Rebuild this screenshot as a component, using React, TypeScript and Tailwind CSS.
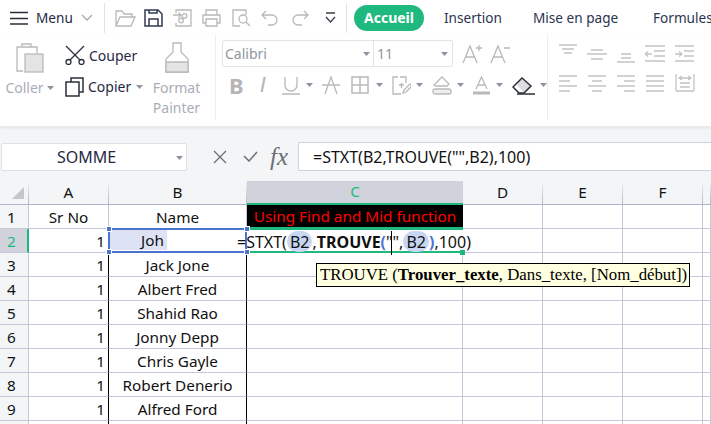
import React from "react";

const Caret = ({ className = "" }: { className?: string }) => (
  <svg width="7" height="4" viewBox="0 0 7 4" className={`shrink-0 ${className}`}>
    <path d="M0 0h7L3.5 4z" fill="#8f93a0" />
  </svg>
);

const Icon: React.FC<{ w: number; h: number; c?: string; className?: string; children: React.ReactNode }> = ({
  w,
  h,
  c = "#b9b9b9",
  className = "",
  children,
}) => (
  <svg
    width={w}
    height={h}
    viewBox={`0 0 ${w} ${h}`}
    fill="none"
    stroke={c}
    strokeWidth="1.3"
    className={`shrink-0 ${className}`}
  >
    {children}
  </svg>
);

const TopBar = () => (
  <div className="h-[35px] flex items-center text-[13.6px] whitespace-nowrap overflow-hidden">
    <Icon w={18} h={14} c="#2b2f3a" className="ml-[10px]">
      <path d="M0 1.500h18M0 7.500h18M0 13h18" />
    </Icon>
    <span className="ml-[8px] mt-px w-[36px] shrink-0 text-[#1f2a44]">Menu</span>
    <Icon w={12} h={7} c="#a5a8b0" className="ml-[9px]">
      <path d="M1 1l5 5 5-5" />
    </Icon>
    <div className="ml-[11px] w-px h-[30px] shrink-0 bg-[#e2e3e6]" />
    <Icon w={21} h={18} className="ml-[10px]">
      <path d="M1 17V2h6l2 3h8v3M1 17h15l4-9H5z" />
    </Icon>
    <Icon w={19} h={18} c="#2f3a52" className="ml-[8px]">
      <path d="M1 1h13l4 4v12H1zM5 17v-7h9v7M5 1v3h8V1" strokeWidth="1.5" />
    </Icon>
    <Icon w={20} h={18} className="ml-[10px]">
      <path d="M3 4V1h15v16H3v-3M0 6h8M5.500 3.500L8 6l-2.500 2.500" />
      <circle cx="11.500" cy="7" r="2.300" />
      <circle cx="8" cy="11.500" r="2.300" />
    </Icon>
    <Icon w={19} h={18} className="ml-[9px]">
      <path d="M4 6V1h11v5M4 14H1V6h17v8h-3M4 10h11v7H4z" />
    </Icon>
    <Icon w={19} h={18} className="ml-[11px]">
      <path d="M8 17H1V1h13v5M7 10a4 4 0 1 0 8 0 4 4 0 1 0-8 0M14 13l4 4" />
    </Icon>
    <Icon w={17} h={16} className="ml-[10px]">
      <path d="M5 1L1 5l4 4M1 5h10a5 5 0 0 1 0 10H7" />
    </Icon>
    <Icon w={17} h={16} className="ml-[14px]">
      <path d="M12 1l4 4-4 4M16 5H6a5 5 0 0 0 0 10h4" />
    </Icon>
    <Icon w={11} h={11} c="#3a3f4b" className="ml-[16px]">
      <path d="M1 1h9M1 5l4.500 5L10 5" />
    </Icon>
    <div className="ml-[10px] w-px h-[30px] shrink-0 bg-[#e2e3e6]" />
    <span className="ml-[7px] h-[26px] w-[70px] shrink-0 rounded-full bg-[#1fb97f] text-white text-[14px] font-bold flex items-center justify-center">
      Accueil
    </span>
    <span className="ml-[20px] mt-px w-[57px] shrink-0 text-[#2a3550]">Insertion</span>
    <span className="ml-[32px] mt-px w-[89px] shrink-0 text-[#2a3550]">Mise en page</span>
    <span className="ml-[31px] mt-px shrink-0 text-[#2a3550]">Formules</span>
  </div>
);

const ClipSection = () => (
  <div className="w-[216px] h-[86px] shrink-0 border-r border-[#eeeff1] flex text-[14px] leading-[20px] whitespace-nowrap">
    <div className="w-[58px] flex flex-col items-center pt-[8px] pl-px">
      <Icon w={28} h={30}>
        <path d="M6 4H1v24h6M6 4V1h9v3h6v6M6 4h9" />
        <rect x="9" y="11" width="18" height="18" fill="#e4e4e4" />
      </Icon>
      <div className="flex items-center gap-[3px] mt-[5px] text-[#a9adb5]">
        Coller
        <Caret />
      </div>
    </div>
    <div className="w-[86px] pl-[7px] pt-[9px] flex flex-col text-[#1f2a44]">
      <div className="flex items-center gap-[4px] h-[24px]">
        <Icon w={20} h={20} c="#2b2f3a" className="mt-[-2px]">
          <path d="M1 1l14 14M19 1L5 15" />
          <circle cx="3.500" cy="17" r="2.500" />
          <circle cx="16.500" cy="17" r="2.500" />
        </Icon>
        Couper
      </div>
      <div className="flex items-center gap-[4px] h-[24px] mt-[7px]">
        <Icon w={19} h={20} c="#2b2f3a" className="mt-[-1px]">
          <path d="M6 5V1h12v14h-4M1 5h13v14H1z" strokeWidth="1.5" />
        </Icon>
        Copier
        <Caret className="ml-[1px]" />
      </div>
    </div>
    <div className="w-[72px] flex flex-col items-center text-[#a9adb5] pt-[7px] pr-[5px] -ml-[1px]">
      <Icon w={24} h={31}>
        <path d="M8 1h8v9l7 7v13H1V17l7-7z" />
        <path d="M1 20h22v10H1z" fill="#e4e4e4" />
      </Icon>
      <span className="mt-[5px]">Format</span>
      <span>Painter</span>
    </div>
  </div>
);

const FontSection = () => (
  <div className="w-[332px] h-[86px] shrink-0 border-r border-[#eeeff1] pl-[6px] pt-[5px] text-[14px] whitespace-nowrap">
    <div className="flex items-center">
      <div className="w-[231px] h-[27px] border border-[#e3e4e7] rounded-[2px] flex items-center text-[#9096a0]">
        <span className="w-[151px] pl-[2px] border-r border-[#e3e4e7] h-full flex items-center relative">
          Calibri
          <Caret className="absolute right-[3px] top-[11px]" />
        </span>
        <span className="pl-[3px] grow flex items-center justify-between pr-[4px]">
          11
          <Caret />
        </span>
      </div>
      <Icon w={20} h={20} className="ml-[9px]">
        <path d="M1 19L8 2l7 17M4 13h8M14 4h6M17 1v6" />
      </Icon>
      <Icon w={20} h={20} className="ml-[8px]">
        <path d="M1 19L8 2l7 17M4 13h8M14 4h6" />
      </Icon>
    </div>
    <div className="flex items-center mt-[5px] h-[26px] text-[#b5b5b5]">
      <span className="ml-[7px] w-[15px] font-bold text-[22px] leading-none">B</span>
      <span className="ml-[16px] w-[11px] text-[22px] italic leading-none font-['Liberation_Sans',sans-serif] font-light">I</span>
      <Icon w={18} h={19} className="ml-[14px]">
        <path d="M3 1v8a6 6 0 0 0 12 0V1M0 18h18" />
      </Icon>
      <Caret className="ml-[6px]" />
      <Icon w={18} h={19} className="ml-[9px]">
        <path d="M3 18L9 1l6 17M0 9h18" />
      </Icon>
      <Icon w={18} h={18} className="ml-[11px]">
        <path d="M1 1h16v16H1zM1 9h16M9 1v16" strokeWidth="1.5" />
      </Icon>
      <Caret className="ml-[7px]" />
      <Icon w={19} h={19} className="ml-[9px]">
        <path d="M6 1H1v17h8M14 7V1H8M7 9h5M9.500 7v5M11 17l1-3 6-6 2 2-6 6z" />
      </Icon>
      <Caret className="ml-[5px]" />
      <Icon w={20} h={19} className="ml-[9px]">
        <path d="M2 9l8-8 7 7-2 2H4z" />
        <rect x="1" y="13" width="18" height="5" rx="2" fill="#eeeeee" />
      </Icon>
      <Caret className="ml-[5px]" />
      <Icon w={17} h={19} className="ml-[9px]">
        <path d="M3 13L8.500 1 14 13M5 9h7" />
        <path d="M0 17h17" strokeWidth="3" />
      </Icon>
      <Caret className="ml-[6px]" />
      <Icon w={26} h={19} c="#2b2f3a" className="ml-[9px]">
        <path d="M9 3l10 7-7 7-7-8z" fill="#dddddd" stroke="none" />
        <path d="M1 11l9-9 9 8-7 7H7z" strokeWidth="1.5" />
        <path d="M5 18h18" strokeWidth="1.5" />
      </Icon>
      <Caret className="ml-[2px]" />
    </div>
  </div>
);

const AlignSection = () => {
  const c = "#c4c4c4";
  return (
    <div className="pl-[11px] pt-[9px] flex flex-col gap-[9px]">
      <div className="flex gap-[10px] items-start">
        <Icon w={18} h={20} c={c}>
          <path d="M0 1h18M3 5h12M5 9h8" />
        </Icon>
        <Icon w={20} h={20} c={c}>
          <path d="M4 6h12M0 10h20M4 15h12" />
        </Icon>
        <Icon w={18} h={20} c={c}>
          <path d="M4 10h10M4 14h10M0 18h18" />
        </Icon>
        <Icon w={20} h={20} c={c}>
          <path d="M0 2h20M9 7h11M0 10h7M3 7.500L0 10l3 2.500M9 12h11M0 17h20" />
        </Icon>
        <Icon w={19} h={20} c={c}>
          <path d="M0 2h19M9 7h10M0 10h7M4 7.500L7 10l-3 2.500M9 12h10M0 17h19" />
        </Icon>
      </div>
      <div className="flex gap-[11px] items-start">
        <Icon w={18} h={19} c={c}>
          <path d="M0 3h18M0 8h11M0 13h18M0 18h11" />
        </Icon>
        <Icon w={18} h={19} c={c}>
          <path d="M0 3h18M4 8h10M0 13h18M4 18h10" />
        </Icon>
        <Icon w={18} h={19} c={c}>
          <path d="M0 3h18M7 8h11M0 13h18M7 18h11" />
        </Icon>
        <Icon w={18} h={19} c={c}>
          <path d="M0 3h18M0 8h18M0 13h18M0 18h18" />
        </Icon>
        <Icon w={20} h={19} c={c}>
          <path d="M1 1v17M19 1v17M1 18h18M5 10h10M5 14h10M4 5h12M7 3L4 5l3 2M13 3l3 2-3 2" />
        </Icon>
      </div>
    </div>
  );
};

const FormulaBar = () => (
  <div className="h-[44px] bg-[#f4f5f7] pt-[15px] flex items-stretch text-[16px] whitespace-nowrap text-[#111]">
    <div className="ml-px w-[186px] h-[28px] mt-px bg-white border border-[#dfe0e3] rounded-[2px] flex items-center relative">
      <span className="w-full text-center pr-[15px] text-[#1f2a44]">SOMME</span>
      <Caret className="absolute right-[3px] top-[12px]" />
    </div>
    <div className="flex items-center h-[29px] w-[111px] shrink-0">
      <Icon w={14} h={14} c="#6b6f78" className="ml-[26px]">
        <path d="M1 1l12 12M13 1L1 13" />
      </Icon>
      <Icon w={15} h={11} c="#6b6f78" className="ml-[16px]">
        <path d="M1 5l5 5 8-9" strokeWidth="1.5" />
      </Icon>
      <span className="ml-[12px] font-['Liberation_Serif',serif] italic text-[25px] leading-none text-[#6b6f78]">fx</span>
    </div>
    <div className="grow h-[29px] bg-white border-y border-l border-[#cfd2dc] rounded-l-[2px] pl-[14px] flex items-center">
      =STXT(B2,TROUVE("",B2),100)
    </div>
  </div>
);

const columns = ["A", "B", "C", "D", "E", "F", ""];

const names = ["Jack Jone", "Albert Fred", "Shahid Rao", "Jonny Depp", "Chris Gayle", "Robert Denerio", "Alfred Ford", ""];

const Sheet = () => {
  const line = "border-r border-b border-[#c4c9da]";
  const cell = `h-[24px] pt-[2px] flex items-center ${line}`;
  return (
    <div className="relative grid grid-cols-[29px_80px_138px_216px_80px_80px_80px_8px] text-[15.3px] leading-none whitespace-nowrap text-[#111]">
      {/* header */}
      <div className="h-[34px] bg-[#f4f5f7] border-b border-[#aeb4c8] pt-[10px]">
        <div className="h-[23px] relative border-r border-[#aeb4c8] [border-image:linear-gradient(to_bottom,#f4f5f7,#aeb4c8)_1]">
          <svg width="12" height="12" viewBox="0 0 12 12" className="absolute left-[12px] top-[6px]">
            <path d="M12 0v12H0z" fill="#c4c6cc" />
          </svg>
        </div>
      </div>
      {columns.map((c) =>
        c === "C" ? (
          <div key={c} className="h-[34px] bg-[#f4f5f7] pt-[10px]">
            <div className="h-[24px] bg-[#d0d3db] border-b-2 border-[#1fb97f] text-[#1fb97f] flex items-center justify-center">
              C
            </div>
          </div>
        ) : (
          <div key={c} className="h-[34px] bg-[#f4f5f7] border-b border-[#aeb4c8] pt-[10px]">
            <div className="h-[23px] flex items-center justify-center border-r border-[#aeb4c8] [border-image:linear-gradient(to_bottom,#f4f5f7,#aeb4c8)_1]">
              {c}
            </div>
          </div>
        ),
      )}

      {/* row 1 */}
      <div className={`${cell} bg-[#f4f5f7] pl-[7px]`}>1</div>
      <div className={`${cell} justify-center`}>Sr No</div>
      <div className={`${cell} justify-center`}>Name</div>
      <div className="h-[24px] pt-[2px] bg-black text-[#ff0000] flex items-center justify-center border-b-2 border-[#1fb97f]">
        Using Find and Mid function
      </div>
      {[0, 1, 2, 3].map((i) => (
        <div key={i} className={cell} />
      ))}

      {/* row 2 */}
      <div className="h-[24px] pt-[2px] bg-[#d0d3db] text-[#1fb97f] border-r-2 border-[#1fb97f] border-b border-b-[#c4c9da] pl-[7px] flex items-center">
        2
      </div>
      <div className={`${cell} justify-end pr-[3px]`}>1</div>
      <div className="h-[24px]" />
      <div className="h-[24px]" />
      {[0, 1, 2, 3].map((i) => (
        <div key={i} className={cell} />
      ))}

      {/* rows 3-10 */}
      {names.map((n, i) => (
        <React.Fragment key={i}>
          <div className={`${cell} bg-[#f4f5f7] pl-[7px]`}>{i + 3 > 9 ? "" : i + 3}</div>
          <div className={`${cell} justify-end pr-[3px] border-r-black`}>{n ? 1 : ""}</div>
          <div className={`${cell} justify-center border-r-black`}>{n}</div>
          {[0, 1, 2, 3, 4].map((k) => (
            <div key={k} className={cell} />
          ))}
        </React.Fragment>
      ))}

      {/* cell being edited, over the grid */}
      <div className="absolute left-[110px] top-[59px] w-[57px] h-[20px] pt-[2px] bg-[#dde3f5] flex items-center pl-[31px]">Joh</div>
      <div className="absolute left-[108px] top-[57px] w-[139px] h-[25px] border-2 border-[#4a74d0]" />
      <div className="absolute left-[247px] top-[57px] w-[216px] h-[25px] border-y-2 border-[#1fb97f]" />
      <div className="absolute left-[106px] top-[55px] size-[6px] bg-[#4a74d0] border border-white" />
      <div className="absolute left-[244px] top-[55px] size-[6px] bg-[#4a74d0] border border-white" />
      <div className="absolute left-[106px] top-[78px] size-[6px] bg-[#4a74d0] border border-white" />
      <div className="absolute left-[244px] top-[78px] size-[6px] bg-[#4a74d0] border border-white" />
      <div className="absolute left-[460px] top-[79px] size-[5px] bg-[#1fb97f]" />

      <div className="absolute left-[237px] top-[60px] h-[21px] text-[16px] flex items-center">
        =STXT(
        <span className="bg-[#c8d6f2] rounded-full px-[3px] h-[21px] flex items-center">B2</span>
        <span>,</span>
        <span className="font-bold">TROUVE</span>
        <span className="font-bold text-[#4a74d0]">(</span>
        <span className="relative">
          ""
          <span className="absolute left-[5px] top-[-3px] w-px h-[24px] bg-black" />
        </span>
        ,
        <span className="bg-[#c8d6f2] rounded-full px-[3px] h-[21px] flex items-center">B2</span>
        <span className="font-bold text-[#4a74d0]">)</span>
        ,100)
      </div>

      <div className="absolute left-[316px] top-[92px] h-[24px] bg-[#ffffe1] border border-black pl-[3px] pr-[2px] flex items-center font-['Liberation_Serif',serif] text-[16.8px] text-black">
        TROUVE (<b>Trouver_texte</b>, Dans_texte, [Nom_début])
      </div>
    </div>
  );
};

export default function App() {
  return (
    <div className="w-[711px] h-[424px] overflow-hidden bg-white font-['Noto_Sans',sans-serif]">
      <TopBar />
      <div className="h-[92px] flex overflow-hidden border-b border-[#ebecee] shadow-[0_1px_3px_rgba(0,0,0,0.08)] relative">
        <ClipSection />
        <FontSection />
        <AlignSection />
      </div>
      <FormulaBar />
      <Sheet />
    </div>
  );
}
